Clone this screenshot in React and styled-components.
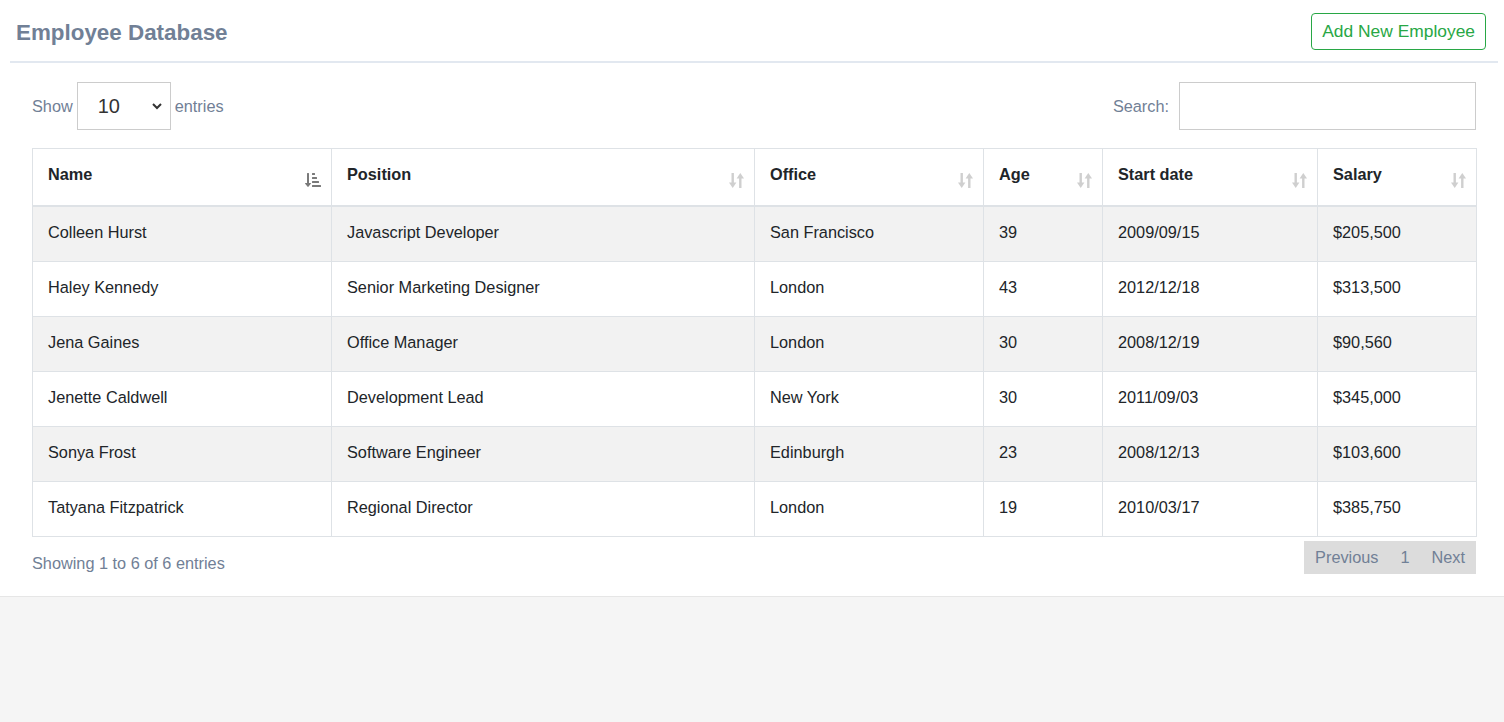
import React from 'react'
import styled, {createGlobalStyle} from 'styled-components'
import {FaSortAmountDownAlt} from 'react-icons/fa'

const Global = createGlobalStyle`
    body {
        margin      : 0;
        background  : #f5f5f5;
        font-family : "Liberation Sans", Arial, sans-serif;
        color       : #212529;
    }
`

const Panel = styled.div`
    background      : white;
    border-bottom   : 1px solid #e6e6e6;
    padding-bottom  : 22px;
`

const Header = styled.div`
    display         : flex;
    align-items     : center;
    justify-content : space-between;
    margin          : 0 6px 0 10px;
    padding         : 13px 12px 11px 6px;
    border-bottom   : 2px solid #e2e8f0;
`

const Title = styled.h1`
    margin          : 2px 0 0;
    font-size       : 22.4px;
    font-weight     : bold;
    color           : #718096;
`

const AddButton = styled.button`
    font-family     : inherit;
    font-size       : 17.4px;
    color           : #28a745;
    background      : white;
    border          : 1px solid #28a745;
    border-radius   : 4px;
    height          : 37px;
    padding         : 0 10px;
`

const Content = styled.div`
    padding         : 19px 28px 0 32px;
`

const Controls = styled.div`
    display         : flex;
    align-items     : center;
    justify-content : space-between;
    margin-bottom   : 18px;
`

const Label = styled.label`
    display         : flex;
    align-items     : center;
    gap             : ${p=>p.gap ?? '4px'};
    font-size       : 16.3px;
    color           : #718096;
`

const Select = styled.div`
    display         : flex;
    align-items     : center;
    justify-content : space-between;
    box-sizing      : border-box;
    width           : 94px;
    height          : 48px;
    padding         : 0 6px 0 20px;
    border          : 1px solid #ccc;
    font-size       : 20px;
    color           : #333;
`

const Input = styled.input`
    box-sizing      : border-box;
    width           : 297px;
    height          : 48px;
    border          : 1px solid #ccc;
    outline         : none;
`

const Table = styled.table`
    width           : 100%;
    border-collapse : collapse;
    table-layout    : fixed;
    border          : 1px solid #dee2e6;
`

const Th = styled.th`
    position        : relative;
    height          : 51px;
    padding         : 0 15px 5px;
    text-align      : left;
    font-size       : 16.3px;
    font-weight     : bold;
    color           : #212529;
    border          : 1px solid #dee2e6;
    border-bottom   : 2px solid #dee2e6;
`

const SortIcon = styled.span`
    position        : absolute;
    right           : 10px;
    top             : 23px;
    display         : flex;
    color           : ${p=>p.active ? '#7a7a7a' : '#cfcfcf'};
`

const Row = styled.tr`
    background      : ${p=>p.odd ? '#f2f2f2' : 'white'};
`

const Td = styled.td`
    height          : 50px;
    padding         : 0 15px 4px;
    font-size       : 16.3px;
    color           : #212529;
    border          : 1px solid #dee2e6;
`

const Footer = styled.div`
    display         : flex;
    justify-content : space-between;
    align-items     : flex-start;
    margin-top      : 4px;
`

const Info = styled.div`
    padding-top     : 13px;
    font-size       : 16.3px;
    color           : #718096;
`

const Pager = styled.div`
    display         : flex;
    align-items     : center;
    height          : 33px;
    background      : #dcdcdc;
    padding         : 0 11px;
    gap             : 22px;
    font-size       : 16.3px;
    color           : #718096;
`

const Unsorted = () => <svg width="15" height="17" viewBox="0 0 15 17" fill="currentColor">
    <rect x="2.5" y="1" width="2.4" height="11"/>
    <polygon points="0,10.5 7.4,10.5 3.7,16"/>
    <rect x="10.1" y="5" width="2.4" height="11"/>
    <polygon points="7.6,6.5 15,6.5 11.3,1"/>
</svg>

const columns = [
    {name:'Name', width:299, active:true},
    {name:'Position', width:423},
    {name:'Office', width:229},
    {name:'Age', width:119},
    {name:'Start date', width:215},
    {name:'Salary', width:159},
]

const data = [
    ['Colleen Hurst','Javascript Developer','San Francisco','39','2009/09/15','$205,500'],
    ['Haley Kennedy','Senior Marketing Designer','London','43','2012/12/18','$313,500'],
    ['Jena Gaines','Office Manager','London','30','2008/12/19','$90,560'],
    ['Jenette Caldwell','Development Lead','New York','30','2011/09/03','$345,000'],
    ['Sonya Frost','Software Engineer','Edinburgh','23','2008/12/13','$103,600'],
    ['Tatyana Fitzpatrick','Regional Director','London','19','2010/03/17','$385,750'],
]

const Chevron = () => <svg width="14" height="14" viewBox="0 0 14 14" fill="none" stroke="#333" strokeWidth="2">
    <polyline points="3,5 7,9 11,5"/>
</svg>

const App = () => {
    return <>
        <Global/>
        <Panel>
            <Header>
                <Title>Employee Database</Title>
                <AddButton>Add New Employee</AddButton>
            </Header>
            <Content>
                <Controls>
                    <Label>Show <Select>10<Chevron/></Select> entries</Label>
                    <Label gap='10px'>Search: <Input/></Label>
                </Controls>
                <Table>
                    <colgroup>
                        {columns.map(c=><col key={c.name} style={{width:c.width}}/>)}
                    </colgroup>
                    <thead>
                        <tr>
                            {columns.map(c=><Th key={c.name}>
                                {c.name}
                                <SortIcon active={c.active}>
                                    {c.active ? <FaSortAmountDownAlt size={16}/> : <Unsorted/>}
                                </SortIcon>
                            </Th>)}
                        </tr>
                    </thead>
                    <tbody>
                        {data.map((r,i)=><Row key={r[0]} odd={i%2==0}>
                            {r.map((v,j)=><Td key={j}>{v}</Td>)}
                        </Row>)}
                    </tbody>
                </Table>
                <Footer>
                    <Info>Showing 1 to 6 of 6 entries</Info>
                    <Pager>
                        <span>Previous</span>
                        <span>1</span>
                        <span>Next</span>
                    </Pager>
                </Footer>
            </Content>
        </Panel>
    </>
}

export default App
